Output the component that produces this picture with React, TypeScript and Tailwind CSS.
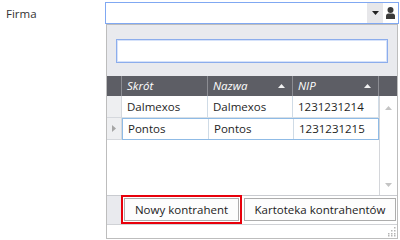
import React from 'react';

const font = { fontFamily: '"Open Sans", "Noto Sans", sans-serif' };

function SortUp() {
  return (
    <svg width="7" height="4" viewBox="0 0 7 4" className="shrink-0">
      <path d="M0 4 L3.5 0 L7 4 Z" fill="#f2f2f2" />
    </svg>
  );
}

function HeaderCell({ label, sort, w }: { label: string; sort?: boolean; w: string }) {
  return (
    <div className={`${w} h-full flex items-center justify-between pl-[5px] pr-[7px] border-r border-[#8c8d93]`}>
      <span className="italic text-white text-[11.5px]">{label}</span>
      {sort && <SortUp />}
    </div>
  );
}

function Row({ cells, current }: { cells: string[]; current?: boolean }) {
  return (
    <div className="flex h-[22px]">
      <div className="w-[15px] shrink-0 bg-[#eeeff1] border-r border-b border-[#d5d8dd] flex items-center justify-center">
        {current && (
          <svg width="4" height="7" viewBox="0 0 4 7">
            <path d="M0 0 L4 3.5 L0 7 Z" fill="#a6a6a6" />
          </svg>
        )}
      </div>
      <div className={`flex ${current ? 'border border-[#8fbbe6]' : 'border-b border-[#d7dfe6]'}`}>
        <div className="w-[86px] flex items-center pl-[5px] border-r border-[#cfdbe6] text-[11.5px] text-[#1e1e1e]">{cells[0]}</div>
        <div className="w-[85px] flex items-center pl-[5px] border-r border-[#cfdbe6] text-[11.5px] text-[#1e1e1e]">{cells[1]}</div>
        <div className={`${current ? 'w-[84px]' : 'w-[86px] border-r border-[#cfdbe6]'} flex items-center pl-[5px] text-[11.5px] text-[#1e1e1e]`}>{cells[2]}</div>
      </div>
    </div>
  );
}

export default function App() {
  return (
    <div className="w-[400px] h-[240px] bg-white flex overflow-hidden" style={font}>
      <div className="w-[105px] shrink-0 pl-[6px] pt-[5px] text-[11.5px] text-[#333]">Firma</div>

      <div className="w-[294px] flex flex-col pt-[2px]">
        {/* combo */}
        <div className="h-[22px] flex border border-[#80a8f2] bg-white">
          <div className="flex-1" />
          <div className="w-[16px] bg-[#e7e7ea] flex items-center justify-center">
            <svg width="7" height="4" viewBox="0 0 7 4">
              <path d="M0 0 L7 0 L3.5 4 Z" fill="#222" />
            </svg>
          </div>
          <div className="w-[15px] flex items-center justify-center">
            <svg width="11" height="12" viewBox="0 0 11 12">
              <circle cx="5.5" cy="3" r="3" fill="#3a3a3a" />
              <path d="M1 12 L1 9 Q1 6.5 3.5 6.5 L7.5 6.5 Q10 6.5 10 9 L10 12 Z" fill="#3a3a3a" />
            </svg>
          </div>
        </div>

        {/* popup */}
        <div className="ml-[1px] w-[292px] h-[215px] border border-[#bdbdbd] bg-[#e9eaee] flex flex-col">
          <div className="px-[9px] pt-[14px] pb-[13px]">
            <div className="h-[24px] border border-[#8cadec] bg-white shadow-[inset_0_0_0_1px_#d6e2fa]" />
          </div>

          {/* grid */}
          <div className="h-[119px] bg-white flex flex-col">
            <div className="h-[20px] bg-[#5d5e65] flex">
              <div className="w-[15px] border-r border-[#8c8d93]" />
              <HeaderCell label="Skrót" w="w-[86px]" />
              <HeaderCell label="Nazwa" sort w="w-[85px]" />
              <HeaderCell label="NIP" sort w="w-[86px]" />
              <div className="flex-1" />
            </div>
            <div className="flex flex-1">
              <div className="w-[272px] flex flex-col">
                <Row cells={['Dalmexos', 'Dalmexos', '1231231214']} />
                <Row cells={['Pontos', 'Pontos', '1231231215']} current />
              </div>
              <div className="flex-1 border-l border-[#d4d6da] flex flex-col items-center justify-between pt-[10px] pb-[8px]">
                <svg width="7" height="4" viewBox="0 0 7 4">
                  <path d="M0 4 L3.5 0 L7 4 Z" fill="#c4c4c4" />
                </svg>
                <svg width="7" height="4" viewBox="0 0 7 4">
                  <path d="M0 0 L7 0 L3.5 4 Z" fill="#c4c4c4" />
                </svg>
              </div>
            </div>
          </div>

          {/* footer buttons */}
          <div className="h-[29px] bg-white border-t border-[#c9cbd0] flex">
            <div className="w-[14px] bg-[#e9eaee]" />
            <div className="border-2 border-[#e8000b] p-[1px] h-[29px] -mt-px">
              <div className="w-[115px] h-[23px] border border-[#adadad] bg-[#fdfdfd] flex items-center justify-center text-[11.5px] text-[#222]">
                Nowy kontrahent
              </div>
            </div>
            <div className="ml-[2px] mt-[2px] w-[152px] h-[23px] border border-[#adadad] bg-[#fdfdfd] flex items-center justify-center text-[11.5px] text-[#222]">
              Kartoteka kontrahentów
            </div>
          </div>

          {/* bottom bar */}
          <div className="flex-1 bg-white border-t border-[#d0d2d6] flex items-end justify-end pr-[1px] pb-[1px]">
            <svg width="10" height="10" viewBox="0 0 10 10">
              {[
                [8, 0], [5, 3], [8, 3], [2, 6], [5, 6], [8, 6], [8, 8], [5, 8], [2, 8],
              ].map(([x, y], i) => (
                <rect key={i} x={x} y={y} width="1.5" height="1.5" fill="#b5b5b5" />
              ))}
            </svg>
          </div>
        </div>
      </div>
    </div>
  );
}
